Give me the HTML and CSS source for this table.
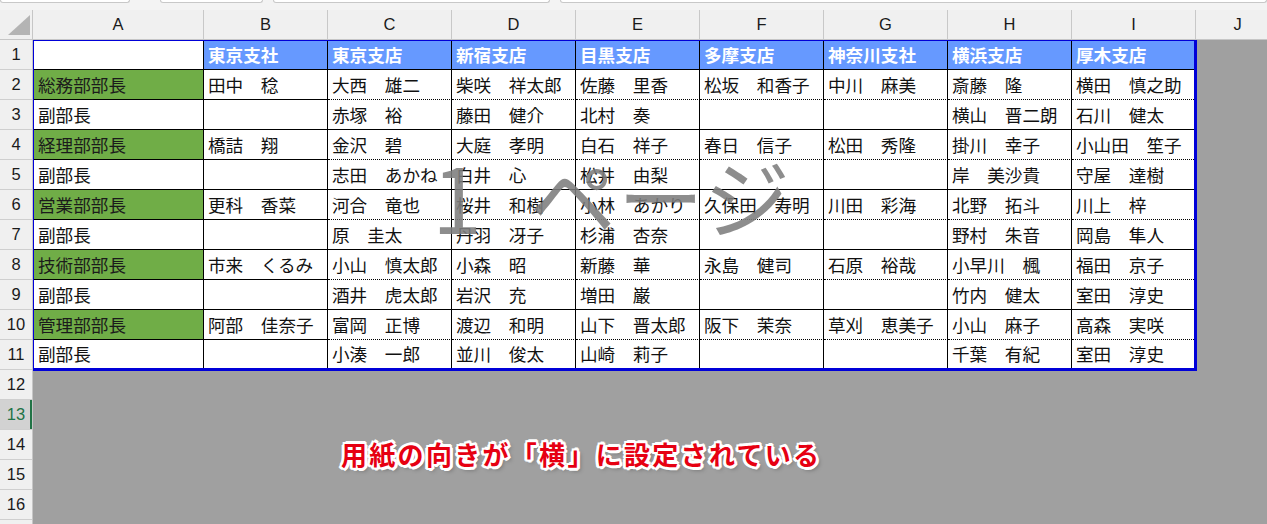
FILE: index.html
```html
<!DOCTYPE html>
<html lang="ja">
<head>
<meta charset="utf-8">
<title>改ページプレビュー</title>
<link rel="stylesheet" href="styles.css">
</head>
<body>
<div class="app">
  <div class="topbar">
    <div class="tb tb1"></div>
    <div class="tb tb2"></div>
    <div class="tb tb3"></div>
    <div class="tb tb4"></div>
  </div>
  <div class="colhead">
    <div class="corner">
      <svg width="32" height="29" viewBox="0 0 32 29"><polygon points="30,5 30,25 8,25" fill="#b4b4b4"/></svg>
    </div>
    <div class="ch ch-a">A</div>
    <div class="ch">B</div>
    <div class="ch">C</div>
    <div class="ch">D</div>
    <div class="ch">E</div>
    <div class="ch">F</div>
    <div class="ch">G</div>
    <div class="ch">H</div>
    <div class="ch">I</div>
    <div class="ch ch-j">J</div>
  </div>
  <div class="main">
    <div class="rowhead">
      <div class="rh">1</div><div class="rh">2</div><div class="rh">3</div><div class="rh">4</div>
      <div class="rh">5</div><div class="rh">6</div><div class="rh">7</div><div class="rh">8</div>
      <div class="rh">9</div><div class="rh">10</div><div class="rh">11</div><div class="rh">12</div>
      <div class="rh rh-sel">13</div><div class="rh">14</div><div class="rh">15</div><div class="rh">16</div>
      <div class="rh"></div>
    </div>
    <div class="canvas">
      <div class="print">
        <div class="grid">
          <!-- row 1 -->
          <div class="c"></div>
          <div class="c hd">東京支社</div>
          <div class="c hd">東京支店</div>
          <div class="c hd">新宿支店</div>
          <div class="c hd">目黒支店</div>
          <div class="c hd">多摩支店</div>
          <div class="c hd">神奈川支社</div>
          <div class="c hd">横浜支店</div>
          <div class="c hd last">厚木支店</div>
          <!-- row 2 -->
          <div class="c g">総務部部長</div>
          <div class="c">田中　稔</div>
          <div class="c dot">大西　雄二</div>
          <div class="c dot">柴咲　祥太郎</div>
          <div class="c dot">佐藤　里香</div>
          <div class="c dot">松坂　和香子</div>
          <div class="c dot">中川　麻美</div>
          <div class="c dot">斎藤　隆</div>
          <div class="c dot last">横田　慎之助</div>
          <!-- row 3 -->
          <div class="c">副部長</div>
          <div class="c"></div>
          <div class="c">赤塚　裕</div>
          <div class="c">藤田　健介</div>
          <div class="c">北村　奏</div>
          <div class="c"></div>
          <div class="c"></div>
          <div class="c">横山　晋二朗</div>
          <div class="c last">石川　健太</div>
          <!-- row 4 -->
          <div class="c g">経理部部長</div>
          <div class="c">橋詰　翔</div>
          <div class="c dot">金沢　碧</div>
          <div class="c dot">大庭　孝明</div>
          <div class="c dot">白石　祥子</div>
          <div class="c dot">春日　信子</div>
          <div class="c dot">松田　秀隆</div>
          <div class="c dot">掛川　幸子</div>
          <div class="c dot last">小山田　笙子</div>
          <!-- row 5 -->
          <div class="c">副部長</div>
          <div class="c"></div>
          <div class="c">志田　あかね</div>
          <div class="c">白井　心</div>
          <div class="c">松井　由梨</div>
          <div class="c"></div>
          <div class="c"></div>
          <div class="c">岸　美沙貴</div>
          <div class="c last">守屋　達樹</div>
          <!-- row 6 -->
          <div class="c g">営業部部長</div>
          <div class="c">更科　香菜</div>
          <div class="c dot">河合　竜也</div>
          <div class="c dot">桜井　和樹</div>
          <div class="c dot">小林　あかり</div>
          <div class="c dot">久保田　寿明</div>
          <div class="c dot">川田　彩海</div>
          <div class="c dot">北野　拓斗</div>
          <div class="c dot last">川上　梓</div>
          <!-- row 7 -->
          <div class="c">副部長</div>
          <div class="c"></div>
          <div class="c">原　圭太</div>
          <div class="c">丹羽　冴子</div>
          <div class="c">杉浦　杏奈</div>
          <div class="c"></div>
          <div class="c"></div>
          <div class="c">野村　朱音</div>
          <div class="c last">岡島　隼人</div>
          <!-- row 8 -->
          <div class="c g">技術部部長</div>
          <div class="c">市来　くるみ</div>
          <div class="c dot">小山　慎太郎</div>
          <div class="c dot">小森　昭</div>
          <div class="c dot">新藤　華</div>
          <div class="c dot">永島　健司</div>
          <div class="c dot">石原　裕哉</div>
          <div class="c dot">小早川　楓</div>
          <div class="c dot last">福田　京子</div>
          <!-- row 9 -->
          <div class="c">副部長</div>
          <div class="c"></div>
          <div class="c">酒井　虎太郎</div>
          <div class="c">岩沢　充</div>
          <div class="c">増田　巌</div>
          <div class="c"></div>
          <div class="c"></div>
          <div class="c">竹内　健太</div>
          <div class="c last">室田　淳史</div>
          <!-- row 10 -->
          <div class="c g">管理部部長</div>
          <div class="c">阿部　佳奈子</div>
          <div class="c dot">富岡　正博</div>
          <div class="c dot">渡辺　和明</div>
          <div class="c dot">山下　晋太郎</div>
          <div class="c dot">阪下　茉奈</div>
          <div class="c dot">草刈　恵美子</div>
          <div class="c dot">小山　麻子</div>
          <div class="c dot last">高森　実咲</div>
          <!-- row 11 -->
          <div class="c end">副部長</div>
          <div class="c end"></div>
          <div class="c end">小湊　一郎</div>
          <div class="c end">並川　俊太</div>
          <div class="c end">山崎　莉子</div>
          <div class="c end"></div>
          <div class="c end"></div>
          <div class="c end">千葉　有紀</div>
          <div class="c end last">室田　淳史</div>
        </div>
        <div class="watermark"><span class="wm-num">1</span><span class="wm-txt">ページ</span></div>
      </div>
    </div>
  </div>
  <div class="note">用紙の向きが「横」に設定されている</div>
</div>
</body>
</html>
```

FILE: styles.css
```css
* { box-sizing: border-box; }
html, body { margin: 0; padding: 0; }
body {
  width: 1267px;
  height: 524px;
  overflow: hidden;
  background: #f0f0f0;
  font-family: "Noto Sans CJK JP", "Noto Sans", sans-serif;
}
.app {
  position: relative;
  width: 1267px;
  height: 524px;
  display: flex;
  flex-direction: column;
}

/* top strip (bottom edges of name box / formula bar) */
.topbar {
  height: 10px;
  display: flex;
  align-items: flex-start;
  background: #f3f3f3;
}
.tb {
  height: 3px;
  background: #ffffff;
  border: 1px solid #c8c8c8;
  border-top: none;
  border-radius: 0 0 4px 4px;
}
.tb1 { width: 130px; }
.tb2 { width: 103px; margin-left: 30px; }
.tb3 { width: 277px; margin-left: 10px; }
.tb4 { flex: 1; margin-left: 10px; }

/* column headers */
.colhead {
  height: 30px;
  display: flex;
  background: #f0f0f0;
  border-bottom: 1px solid #c6c6c6;
  font-family: "Liberation Sans", Arial, sans-serif;
  font-size: 16.5px;
  color: #1a1a1a;
}
.corner {
  width: 33px;
  border-right: 1px solid #c6c6c6;
  position: relative;
}
.corner svg { display: block; }
.ch {
  width: 124px;
  border-right: 1px solid #c8c8c8;
  display: flex;
  align-items: center;
  justify-content: center;
}
.ch-a { width: 171px; }
.ch-j { flex: 1; border-right: none; padding-left: 12px; }

/* main */
.main {
  flex: 1;
  display: flex;
  min-height: 0;
}
.rowhead {
  width: 33px;
  background: #f0f0f0;
  border-right: 1px solid #c6c6c6;
  overflow: hidden;
  font-family: "Liberation Sans", Arial, sans-serif;
  font-size: 16.5px;
  color: #1a1a1a;
}
.rh {
  height: 30px;
  border-bottom: 1px solid #cfcfcf;
  display: flex;
  align-items: center;
  justify-content: center;
}
.rh-sel {
  background: #d2d2d2;
  color: #217346;
  box-shadow: inset -2px 0 0 #217346;
}
.canvas {
  flex: 1;
  background: #a0a0a0;
  overflow: hidden;
}
.print {
  position: relative;
  width: 1164px;
  background: #ffffff;
  border-top: 1px solid #0000d8;
  border-left: 1px solid #0000d8;
  border-right: 3px solid #0000d8;
  border-bottom: 3px solid #0000d8;
}
.grid {
  display: grid;
  grid-template-columns: 170px repeat(7, 124px) 122px;
  grid-template-rows: 29px repeat(9, 30px) 28px;
}
.c {
  border-right: 1px solid #000;
  border-bottom: 1px solid #000;
  padding-left: 4px;
  display: flex;
  align-items: center;
  white-space: nowrap;
  overflow: hidden;
  font-size: 17.6px;
  line-height: 1;
  color: #111;
  background: #fff;
}
.c.hd {
  background: #6699ff;
  color: #ffffff;
  font-weight: 700;
}
.c.g { background: #70ad47; color: #1b1b1b; }
.c.dot { border-bottom: 1px dotted #000; }
.c.last { border-right: none; }
.c.end { border-bottom: none; }

.watermark {
  position: absolute;
  inset: 0;
  display: flex;
  align-items: center;
  justify-content: center;
  gap: 48px;
  padding-bottom: 20px;
  padding-right: 4px;
  font-family: "Noto Sans CJK JP", sans-serif;
  font-size: 86px;
  font-weight: 400;
  line-height: 1;
  color: rgba(125, 125, 125, 0.88);
  white-space: nowrap;
  pointer-events: none;
}
.wm-num { font-size: 90px; }
.wm-txt { letter-spacing: 2px; }

/* callout */
.note {
  position: absolute;
  left: 341px;
  top: 441px;
  font-family: "Noto Sans CJK JP", sans-serif;
  font-size: 26px;
  font-weight: 700;
  line-height: 1;
  letter-spacing: 2.3px;
  color: #e60012;
  white-space: nowrap;
  text-shadow:
    2px 0 0 #fff, -2px 0 0 #fff, 0 2px 0 #fff, 0 -2px 0 #fff,
    2px 2px 0 #fff, -2px 2px 0 #fff, 2px -2px 0 #fff, -2px -2px 0 #fff,
    3px 1px 0 #fff, -3px 1px 0 #fff, 1px 3px 0 #fff, 1px -3px 0 #fff,
    3px 3px 4px rgba(0, 0, 0, 0.35);
}
```
